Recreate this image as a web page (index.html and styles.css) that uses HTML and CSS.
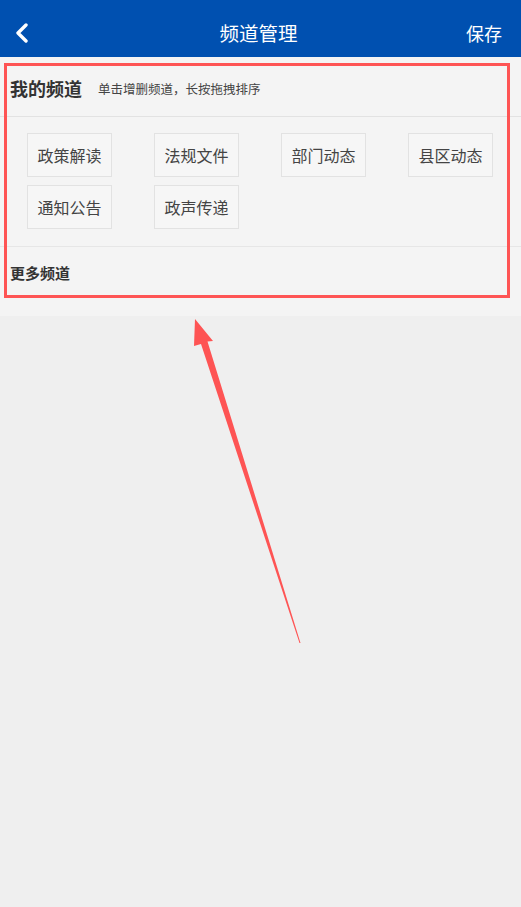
FILE: index.html
```html
<!DOCTYPE html>
<html>
<head>
    <meta name="viewport" content="width=device-width, initial-scale=1.0">
    <title>频道管理</title>
    <link rel="stylesheet" href="styles.css">
</head>
<body>
    <div class="topbar">
        <span class="back">
            <svg width="14" height="20" viewBox="0 0 14 20"><polyline points="11,2 3,10 11,18" fill="none" stroke="#fff" stroke-width="3.4" stroke-linecap="round" stroke-linejoin="round"/></svg>
        </span>
        <h1>频道管理</h1>
        <span class="save">保存</span>
    </div>

    <div class="panel">
        <div class="mine-head">
            <h2>我的频道</h2>
            <span class="hint">单击增删频道，长按拖拽排序</span>
        </div>
        <div class="chips">
            <div class="chip">政策解读</div>
            <div class="chip">法规文件</div>
            <div class="chip">部门动态</div>
            <div class="chip">县区动态</div>
            <div class="chip">通知公告</div>
            <div class="chip">政声传递</div>
        </div>
        <div class="more">更多频道</div>
    </div>

    <!-- annotation drawn over the screenshot -->
    <div class="mark-box"></div>
    <svg class="mark-arrow" width="521" height="907" viewBox="0 0 521 907">
        <polygon points="195,319 213,341 207.5,341.5 300.5,643 299.5,643 201,344 194,346" fill="#fe5454"/>
    </svg>
</body>
</html>
```

FILE: styles.css
```css
body { margin: 0; background: #efefef; font-family: "Noto Sans CJK SC", "Noto Sans", sans-serif; color: #333; }
.topbar { height: 57px; background: #0050b0; color: #fff; display: grid; grid-template-columns: 1fr auto 1fr; align-items: center; padding: 0 19px 0 15px; box-sizing: border-box; }
.topbar h1 { margin: 0; font-size: 19.5px; font-weight: normal; line-height: 1; padding-top: 8px; }
.back { display: flex; padding-top: 8px; }
.save { justify-self: end; font-size: 18px; line-height: 1; padding-top: 8px; }
.panel { background: #f4f4f4; }
.mine-head { height: 60px; display: flex; align-items: center; padding: 0 0 0 10px; border-bottom: 1px solid #e2e2e2; box-sizing: border-box; padding-top: 2px; }
.mine-head h2 { margin: 0; font-size: 18px; font-weight: bold; color: #333; }
.hint { font-size: 12.5px; margin-left: 16px; color: #444; padding-top: 2px; }
.chips { display: grid; grid-template-columns: repeat(4, 85px); column-gap: 42px; row-gap: 8px; padding: 16px 0 17px 27px; border-bottom: 1px solid #e6e6e6; }
.chip { height: 44px; box-sizing: border-box; border: 1px solid #e2e2e2; background: #f6f6f6; display: flex; align-items: center; justify-content: center; font-size: 16px; color: #444; }
.more { height: 69px; box-sizing: border-box; padding: 15px 0 0 10px; font-size: 15px; font-weight: bold; color: #333; }
.mark-box { position: absolute; left: 4px; top: 63px; width: 506px; height: 235px; border: 3px solid #fe5454; box-sizing: border-box; }
.mark-arrow { position: absolute; left: 0; top: 0; pointer-events: none; }
```
